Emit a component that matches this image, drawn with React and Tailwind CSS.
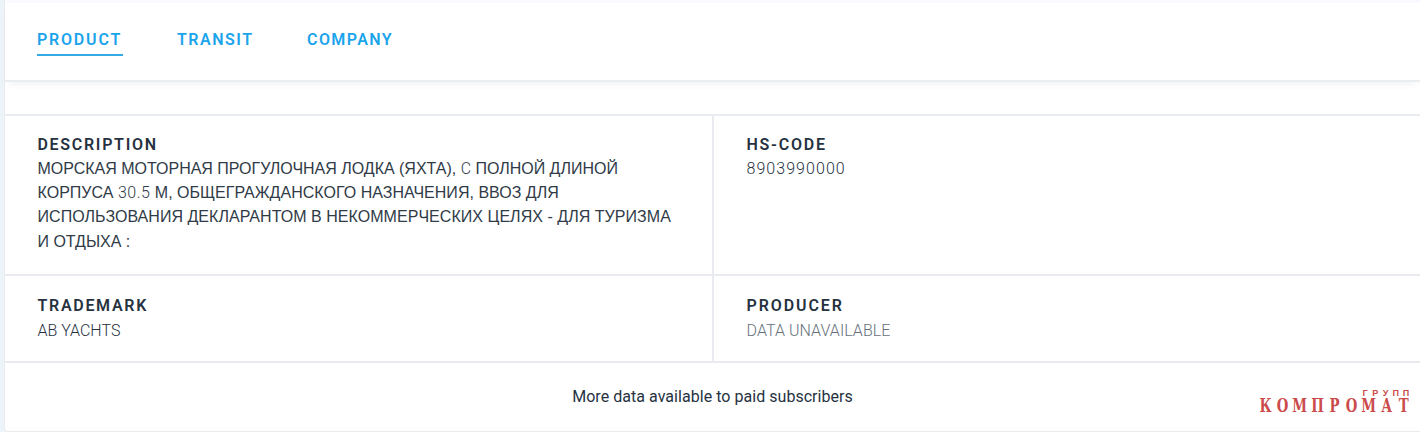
import React, { useState } from 'react';
import { clsx } from 'clsx';

const tabs = [
  { id: 'product', label: 'PRODUCT', className: 'mr-[54px] w-[86px] tracking-[1.8px]' },
  { id: 'transit', label: 'TRANSIT', className: 'mr-[53px] w-[77px] tracking-[1.5px]' },
  { id: 'company', label: 'COMPANY', className: 'w-[88px] tracking-[1.42px]' },
];

const Field = ({ title, titleClass, className, children }) => (
  <div className={clsx('pl-[32.5px]', className)}>
    <h3 className={clsx('h-6 whitespace-nowrap text-base leading-6 font-semibold text-[#26323f]', titleClass)}>
      {title}
    </h3>
    {children}
  </div>
);

const Latin = ({ children, className }) => (
  <span className={clsx("font-['Roboto',sans-serif] font-light", className)}>{children}</span>
);

const Logo = () => (
  <div className="mr-2 flex w-[155px] flex-col items-end pt-[26px] text-[#cb4b4b]">
    <div className="mr-[1px] flex h-2 font-['Liberation_Sans',sans-serif] text-[9px] leading-[8px] font-bold">
      {'ГРУПП'.split('').map((letter, i) => (
        <span key={i} className="w-[10.2px] text-center">{letter}</span>
      ))}
    </div>
    <div className="flex h-4 font-['DejaVu_Serif',serif] text-[18px] leading-[17px] font-bold">
      {'КОМПРОМАТ'.split('').map((letter, i) => (
        <span key={i} className="flex w-[17.25px] scale-x-[0.74] justify-center">{letter}</span>
      ))}
    </div>
  </div>
);

const App = () => {
  const [activeTab, setActiveTab] = useState('product');

  return (
    <div className="h-[432px] w-[1420px] overflow-hidden bg-[#edf4f9] pl-1 font-['Roboto','Liberation_Sans',sans-serif]">
      <div className="flex h-full flex-col rounded-bl border-b border-l border-[#e9ebee] bg-white">
        {/* Tabs */}
        <div className="h-[82px] shrink-0 border-t-[3px] border-b-2 border-t-[#f8faff] border-b-[#e9edf2] bg-white shadow-[0_6px_8px_-5px_rgba(40,60,80,0.09)]">
          <nav className="flex pl-8 pt-6">
            {tabs.map((tab) => (
              <button
                key={tab.id}
                onClick={() => setActiveTab(tab.id)}
                className={clsx(
                  'h-[29px] whitespace-nowrap border-b-2 pb-[1px] text-left text-base leading-[26px] font-semibold text-[#1ba4ec]',
                  activeTab === tab.id ? 'border-[#35a9e5]' : 'border-transparent',
                  tab.className
                )}
              >
                {tab.label}
              </button>
            ))}
          </nav>
        </div>

        {/* Product details */}
        <div className="mt-8 grid shrink-0 grid-cols-[709px_1fr] grid-rows-[160px_87px] border-t-2 border-[#e9edf2]">
          <Field title="DESCRIPTION" titleClass="tracking-[1.7px]" className="border-r-2 border-b-2 border-[#e9ebf1] pt-[17px]">
            <p className="whitespace-nowrap font-['Liberation_Sans',sans-serif] text-base leading-[24.2px] tracking-[-0.01px] text-[#303b47]">
              МОРСКАЯ МОТОРНАЯ ПРОГУЛОЧНАЯ ЛОДКА (ЯХТА), <Latin>C</Latin> ПОЛНОЙ ДЛИНОЙ
              <br />
              <span className="tracking-[0.02px]">
                КОРПУСА <Latin className="tracking-[0.5px]">30.5</Latin> М, ОБЩЕГРАЖДАНСКОГО НАЗНАЧЕНИЯ, ВВОЗ ДЛЯ
              </span>
              <br />
              <span className="tracking-[0.04px]">
                ИСПОЛЬЗОВАНИЯ ДЕКЛАРАНТОМ В НЕКОММЕРЧЕСКИХ ЦЕЛЯХ - ДЛЯ ТУРИЗМА
              </span>
              <br />
              И ОТДЫХА :
            </p>
          </Field>
          <Field title="HS-CODE" titleClass="tracking-[1.75px]" className="border-b-2 border-[#e9ebf1] pt-[17px]">
            <p className="text-base leading-6 font-light tracking-[1.05px] text-[#26323f]">8903990000</p>
          </Field>
          <Field title="TRADEMARK" titleClass="tracking-[1.7px]" className="border-r-2 border-b-2 border-[#e9ebf1] pt-[18px]">
            <p className="text-base leading-[26px] font-light text-[#26323f]">AB YACHTS</p>
          </Field>
          <Field title="PRODUCER" titleClass="tracking-[1.9px]" className="border-b-2 border-[#e9ebf1] pt-[18px]">
            <p className="text-base leading-[26px] font-light tracking-[0.06px] text-[#66717b]">DATA UNAVAILABLE</p>
          </Field>
        </div>

        {/* Footer */}
        <div className="grid flex-1 grid-cols-[1fr_auto_1fr]">
          <p className="col-start-2 whitespace-nowrap pt-[22px] text-base leading-6 tracking-[0.04px] text-[#26323f]">
            More data available to paid subscribers
          </p>
          <div className="flex justify-end">
            <Logo />
          </div>
        </div>
      </div>
    </div>
  );
};

export default App;
